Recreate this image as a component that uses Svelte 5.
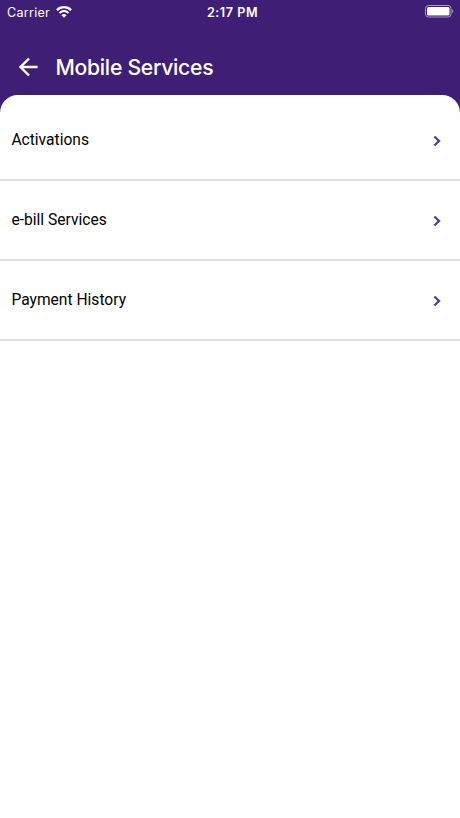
<script lang="ts">
	const time = '2:17 PM';
	const title = 'Mobile Services';

	const items = ['Activations', 'e-bill Services', 'Payment History'];
</script>

<div class="screen">
	<header>
		<div class="status-bar">
			<div class="carrier">
				<span>Carrier</span>
				<svg class="wifi" width="16" height="12" viewBox="0 0 16 12" fill="none" stroke="#fff">
					<path d="M0.9 4.1a10.2 10.2 0 0 1 14.2 0" stroke-width="2.3" />
					<path d="M3.5 7a6.3 6.3 0 0 1 9 0" stroke-width="2" />
					<path d="M8 11.8L5.5 9.3a3.5 3.5 0 0 1 5 0z" fill="#fff" stroke="none" />
				</svg>
			</div>
			<span class="time">{time}</span>
			<div class="battery">
				<svg width="29" height="13" viewBox="0 0 29 13">
					<rect x="0.5" y="0.5" width="25.5" height="11.5" rx="3" fill="none" stroke="#a997c9" />
					<rect x="2" y="2" width="22.5" height="8.5" rx="1.6" fill="#fff" />
					<path d="M27.2 4.3c1.6.6 1.6 3.3 0 3.9z" fill="#a997c9" />
				</svg>
			</div>
		</div>
		<div class="title-bar">
			<button class="back" aria-label="Back">
				<svg width="20" height="20" viewBox="0 0 20 20" fill="none" stroke="#fff" stroke-width="2.4">
					<path d="M19.6 10H2.6M11 1.5L2.5 10l8.5 8.5" />
				</svg>
			</button>
			<h1>{title}</h1>
		</div>
	</header>

	<main>
		{#each items as item}
			<button class="row">
				<span class="row-label">{item}</span>
				<svg width="8" height="12" viewBox="0 0 8 12" fill="none" stroke="#5240a0" stroke-width="2.4">
					<path d="M1.4 1.5L6 6l-4.6 4.5" />
				</svg>
			</button>
		{/each}
	</main>
</div>

<style>
	:global(body) {
		margin: 0;
		background: #3e1f75;
	}

	.screen {
		display: flex;
		flex-direction: column;
		height: 818px;
		background: #3e1f75;
		overflow: hidden;
	}

	header {
		height: 95px;
		color: #fff;
		font-family: Inter, 'Liberation Sans', sans-serif;
	}

	.status-bar {
		display: grid;
		grid-template-columns: 1fr auto 1fr;
		align-items: center;
		height: 24px;
		padding: 0 6px 0 7px;
		font-size: 12.6px;
		letter-spacing: 0.25px;
	}

	.carrier {
		display: flex;
		align-items: center;
		gap: 6px;
	}

	.time {
		padding-left: 4px;
		font-weight: 600;
		letter-spacing: 0.55px;
	}

	.battery {
		display: flex;
		justify-content: flex-end;
		padding-bottom: 2px;
	}

	.title-bar {
		display: flex;
		align-items: center;
		height: 48px;
		margin-top: 19px;
		padding-left: 18px;
	}

	button {
		border: none;
		background: none;
		cursor: pointer;
	}

	.back {
		display: flex;
		width: 20px;
		margin-right: 17.5px;
		padding: 0;
	}

	h1 {
		margin: 0;
		font-size: 21.2px;
		font-weight: 500;
		line-height: 28px;
		letter-spacing: -0.3px;
		white-space: nowrap;
	}

	main {
		flex: 1;
		padding-top: 6px;
		background: #fff;
		border-radius: 18px 18px 0 0;
	}

	.row {
		display: flex;
		align-items: center;
		justify-content: space-between;
		box-sizing: border-box;
		width: 100%;
		height: 80px;
		padding: 1px 19px 0 11.4px;
		border-bottom: 2px solid #e2e2e2;
	}

	.row-label {
		padding-bottom: 2px;
		font-family: Roboto, sans-serif;
		font-size: 15.6px;
		color: #000;
	}
</style>
